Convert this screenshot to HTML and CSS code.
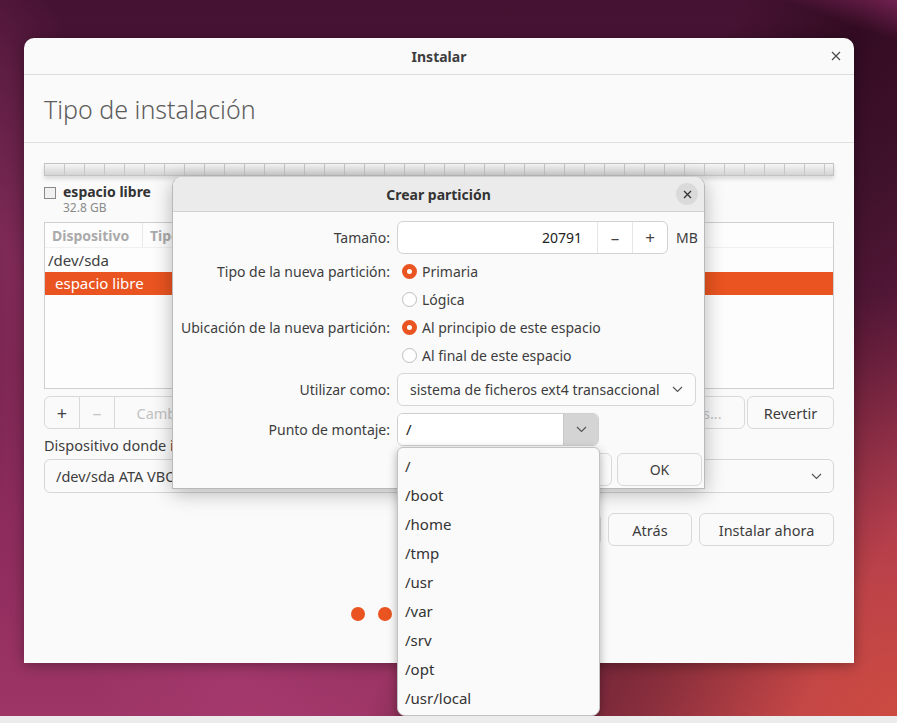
FILE: index.html
```html
<!DOCTYPE html>
<html lang="es">
<head>
<meta charset="utf-8">
<title>Instalar</title>
<link rel="stylesheet" href="styles.css">
</head>
<body>
<div class="desktop">
  <div class="window">
    <div class="headerbar">
      <span></span>
      <span class="wtitle">Instalar</span>
      <span class="wclose"><svg width="10" height="10" viewBox="0 0 10 10"><path d="M1 1L9 9M9 1L1 9" stroke="#4a4a4a" stroke-width="1.2"/></svg></span>
    </div>
    <div class="page-title">Tipo de instalación</div>
    <div class="content">
      <div class="partbar"></div>
      <div class="legend">
        <span class="swatch"></span>
        <div class="legend-text">
          <div class="lg-name">espacio libre</div>
          <div class="lg-size">32.8 GB</div>
        </div>
      </div>
      <div class="ptable">
        <div class="thead">
          <span class="th th-dev">Dispositivo</span>
          <span class="th th-type">Tipo</span>
        </div>
        <div class="tr">/dev/sda</div>
        <div class="tr sel">espacio libre</div>
      </div>
      <div class="toolbar">
        <div class="linked">
          <span class="lbtn sq">+</span>
          <span class="lbtn sq dis">–</span>
          <span class="lbtn dis wide-l">Cambiar...</span>
        </div>
        <div class="spacer"></div>
        <span class="btn dis newtable">Nueva tabla de particiones...</span>
        <span class="btn revert">Revertir</span>
      </div>
      <div class="boot-label">Dispositivo donde instalar el cargador de arranque:</div>
      <div class="combo boot-combo">
        <span>/dev/sda ATA VBOX HARDDISK (32.8 GB)</span>
        <svg class="chev" width="11" height="7" viewBox="0 0 11 7"><path d="M1 1L5.5 5.5L10 1" fill="none" stroke="#555" stroke-width="1.2"/></svg>
      </div>
      <div class="actions">
        <span class="btn quit">Salir</span>
        <span class="btn back">Atrás</span>
        <span class="btn install">Instalar ahora</span>
      </div>
      <div class="dots">
        <span class="dot on"></span><span class="dot on"></span><span class="dot on"></span><span class="dot on"></span><span class="dot on"></span><span class="dot"></span><span class="dot"></span>
      </div>
    </div>
  </div>

  <div class="dialog">
    <div class="dheader">
      <span></span>
      <span class="dtitle">Crear partición</span>
      <span class="dclose"><svg width="9" height="9" viewBox="0 0 9 9"><path d="M1 1L8 8M8 1L1 8" stroke="#333" stroke-width="1.3"/></svg></span>
    </div>
    <div class="dbody">
      <div class="row row-size">
        <span class="lbl">Tamaño:</span>
        <div class="spin">
          <span class="spin-val">20791</span>
          <span class="spin-btn">–</span>
          <span class="spin-btn">+</span>
        </div>
        <span class="unit">MB</span>
      </div>
      <div class="row row-radio first-radio">
        <span class="lbl">Tipo de la nueva partición:</span>
        <span class="radio on"></span><span class="rtext">Primaria</span>
      </div>
      <div class="row row-radio">
        <span class="lbl"></span>
        <span class="radio"></span><span class="rtext">Lógica</span>
      </div>
      <div class="row row-radio">
        <span class="lbl">Ubicación de la nueva partición:</span>
        <span class="radio on"></span><span class="rtext">Al principio de este espacio</span>
      </div>
      <div class="row row-radio">
        <span class="lbl"></span>
        <span class="radio"></span><span class="rtext">Al final de este espacio</span>
      </div>
      <div class="row row-use">
        <span class="lbl">Utilizar como:</span>
        <div class="combo use-combo">
          <span>sistema de ficheros ext4 transaccional</span>
          <svg class="chev" width="11" height="7" viewBox="0 0 11 7"><path d="M1 1L5.5 5.5L10 1" fill="none" stroke="#555" stroke-width="1.2"/></svg>
        </div>
      </div>
      <div class="row row-mount">
        <span class="lbl">Punto de montaje:</span>
        <div class="centry">
          <span class="centry-text">/</span>
          <span class="centry-btn"><svg width="11" height="7" viewBox="0 0 11 7"><path d="M1 1L5.5 5.5L10 1" fill="none" stroke="#555" stroke-width="1.2"/></svg></span>
        </div>
      </div>
      <div class="dactions">
        <span class="btn dbtn">Cancelar</span>
        <span class="btn dbtn">OK</span>
      </div>
    </div>
  </div>

  <div class="popup">
    <div class="pitem">/</div>
    <div class="pitem">/boot</div>
    <div class="pitem">/home</div>
    <div class="pitem">/tmp</div>
    <div class="pitem">/usr</div>
    <div class="pitem">/var</div>
    <div class="pitem">/srv</div>
    <div class="pitem">/opt</div>
    <div class="pitem">/usr/local</div>
  </div>

  <div class="taskstrip"></div>
</div>
</body>
</html>
```

FILE: styles.css
```css
* { box-sizing: border-box; margin: 0; padding: 0; }
html, body { width: 897px; height: 723px; overflow: hidden; }
body {
  font-family: "Noto Sans", "DejaVu Sans", sans-serif;
  font-size: 14px;
  color: #3d3d3d;
}

.desktop {
  position: relative;
  width: 897px;
  height: 723px;
  overflow: hidden;
  background:
    linear-gradient(200deg, rgba(120,35,85,0.9) 0%, rgba(120,35,85,0) 4%),
    linear-gradient(118deg, rgba(30,4,16,0) 58%, rgba(30,4,16,0.5) 68%, rgba(30,4,16,0.3) 80%, rgba(30,4,16,0) 92%),
    linear-gradient(62deg, rgba(170,60,115,0) 8%, rgba(175,62,118,0.4) 20%, rgba(170,60,115,0) 34%),
    radial-gradient(ellipse 520px 420px at 897px 716px, #cc4a40 0%, rgba(204,74,64,0.7) 35%, rgba(204,74,64,0) 100%),
    linear-gradient(180deg, #451232 0%, #541a3c 25%, #6e2049 50%, #8c2b5c 72%, #9e3666 100%);
}

.taskstrip {
  position: absolute;
  left: 0; right: 0; bottom: 0;
  height: 7px;
  background: #ececec;
}

/* main window */
.window {
  position: absolute;
  left: 24px; top: 38px;
  width: 830px; height: 625px;
  background: #fafafa;
  border-radius: 10px 10px 0 0;
  box-shadow: 0 2px 14px rgba(0,0,0,0.35);
  display: flex;
  flex-direction: column;
  white-space: nowrap;
}
.headerbar {
  height: 37px;
  border-bottom: 1px solid #dcdcdc;
  display: grid;
  grid-template-columns: 1fr auto 1fr;
  align-items: center;
}
.wtitle { font-weight: bold; font-size: 14px; color: #3d3d3d; }
.wclose { justify-self: end; margin-right: 13px; display: flex; }

.page-title {
  height: 68px;
  border-bottom: 1px solid #e0e0e0;
  padding-left: 20px;
  display: flex;
  align-items: center;
  font-size: 25px;
  font-weight: 300;
  color: #5c5c5c;
}

.content {
  padding: 20px 20px 0;
  display: flex;
  flex-direction: column;
}

.partbar {
  height: 13px;
  border: 1px solid #c3c3c3;
  background:
    repeating-linear-gradient(90deg, transparent 0 19px, #c6c6c6 19px 20px),
    linear-gradient(#f5f5f5, #d4d4d4);
  box-shadow: 0 3px 4px rgba(0,0,0,0.13);
}

.legend {
  margin-top: 8px;
  display: flex;
  gap: 7px;
}
.swatch {
  width: 12px; height: 12px;
  margin-top: 3px;
  border: 1px solid #8a8a8a;
  background: #f1f1f1;
}
.lg-name { font-weight: bold; line-height: 16px; color: #333; }
.lg-size { font-size: 12px; line-height: 15px; color: #8a8a8a; }

.ptable {
  margin-top: 7px;
  height: 167px;
  border: 1px solid #cfcfcf;
  background: #fdfdfd;
}
.thead {
  height: 25px;
  display: flex;
  align-items: stretch;
  border-bottom: 1px solid #f0f0f0;
}
.th {
  font-weight: bold;
  color: #aaaaaa;
  padding-left: 7px;
  display: flex;
  align-items: center;
}
.th-dev { width: 98px; border-right: 1px solid #e9e9e9; }
.th-type { width: 120px; }
.tr {
  height: 24px;
  line-height: 24px;
  padding-left: 3px;
  font-size: 15px;
}
.tr.sel {
  height: 23px;
  line-height: 23px;
  background: #e95420;
  color: #fff;
  padding-left: 10px;
}

.toolbar {
  margin-top: 7px;
  height: 33px;
  display: flex;
}
.linked {
  display: flex;
  border: 1px solid #d9d9d9;
  border-radius: 6px;
  overflow: hidden;
}
.lbtn {
  display: flex;
  align-items: center;
  justify-content: center;
  border-right: 1px solid #d9d9d9;
  font-size: 14.5px;
}
.lbtn.sq { width: 35px; font-size: 18px; color: #444; }
.lbtn.sq.dis { color: #c8c8c8; }
.lbtn.wide-l { width: 110px; border-right: 0; color: #c2c2c2; }
.spacer { flex: 1; }
.btn {
  display: flex;
  align-items: center;
  justify-content: center;
  height: 33px;
  border: 1px solid #d9d9d9;
  border-radius: 6px;
  background: #fafafa;
  font-size: 14.5px;
  color: #3d3d3d;
}
.btn.dis { color: #c2c2c2; }
.newtable { width: 240px; }
.revert { width: 87px; margin-left: 2px; }

.boot-label {
  margin-top: 7px;
  line-height: 18px;
  font-size: 14.5px;
}
.combo {
  display: flex;
  align-items: center;
  justify-content: space-between;
  border: 1px solid #d6d6d6;
  border-radius: 6px;
  background: #fafafa;
  font-size: 14.5px;
  white-space: nowrap;
}
.boot-combo {
  margin-top: 5px;
  height: 34px;
  padding: 0 11px 0 11px;
}

.actions {
  margin-top: 20px;
  display: flex;
  justify-content: flex-end;
  gap: 7px;
}
.quit { width: 82px; }
.back { width: 84px; }
.install { width: 135px; }

.dots {
  margin-top: 61px;
  display: flex;
  justify-content: center;
  gap: 13px;
}
.dot { width: 14px; height: 14px; border-radius: 50%; background: #d8d8d8; }
.dot.on { background: #e95420; }

/* dialog */
.dialog {
  position: absolute;
  left: 172px; top: 176px;
  width: 533px; height: 313px;
  background: #fafafa;
  border: 1px solid #b9b9b9;
  border-top-color: #d0d0d0;
  border-radius: 10px 10px 0 0;
  box-shadow: 0 4px 20px rgba(0,0,0,0.28);
  display: flex;
  flex-direction: column;
  white-space: nowrap;
}
.dheader {
  height: 35px;
  background: #ebebeb;
  border-bottom: 1px solid #d2d2d2;
  border-radius: 9px 9px 0 0;
  display: grid;
  grid-template-columns: 1fr auto 1fr;
  align-items: center;
}
.dtitle { font-weight: bold; font-size: 14px; color: #333; }
.dclose {
  justify-self: end;
  margin-right: 6px;
  width: 22px; height: 22px;
  border-radius: 50%;
  background: #dadada;
  display: flex;
  align-items: center;
  justify-content: center;
}
.dbody {
  padding: 9px 2px 0 0;
  display: flex;
  flex-direction: column;
}
.row {
  display: flex;
  align-items: center;
}
.lbl {
  width: 217px;
  flex: none;
  margin-right: 7px;
  text-align: right;
  font-size: 14px;
}
.row-size { height: 33px; }
.spin {
  width: 271px;
  height: 33px;
  display: flex;
  border: 1px solid #d2d2d2;
  border-radius: 6px;
  background: #fff;
  overflow: hidden;
}
.spin-val {
  flex: 1;
  text-align: right;
  padding-right: 15px;
  line-height: 31px;
  font-size: 14px;
  color: #222;
}
.spin-btn {
  width: 35px;
  border-left: 1px solid #e6e6e6;
  display: flex;
  align-items: center;
  justify-content: center;
  font-size: 17px;
  color: #444;
}
.unit { margin-left: 8px; font-size: 14px; }

.row-radio { height: 28px; }
.first-radio { margin-top: 3px; }
.radio {
  width: 15px; height: 15px;
  margin-left: 5px;
  border-radius: 50%;
  border: 1px solid #bdbdbd;
  background: #fff;
  flex: none;
}
.radio.on {
  border: 5px solid #e95420;
  background: #fff;
}
.rtext { margin-left: 5px; font-size: 14px; }

.row-use { margin-top: 4px; height: 33px; }
.use-combo {
  width: 299px;
  height: 33px;
  padding: 0 12px;
  background: #fcfcfc;
  font-size: 14px;
}
.row-mount { margin-top: 7px; height: 33px; }
.centry {
  width: 202px;
  height: 33px;
  display: flex;
  border: 1px solid #cfcfcf;
  border-radius: 6px;
  overflow: hidden;
}
.centry-text {
  flex: 1;
  background: #fff;
  padding-left: 8px;
  line-height: 31px;
  font-size: 15px;
  color: #222;
}
.centry-btn {
  width: 35px;
  background: #d4d4d4;
  border-left: 1px solid #c8c8c8;
  display: flex;
  align-items: center;
  justify-content: center;
}
.dactions {
  margin-top: 7px;
  display: flex;
  justify-content: flex-end;
  gap: 5px;
}
.dbtn { width: 85px; font-size: 14px; }

/* dropdown popup */
.popup {
  position: absolute;
  left: 397px; top: 447px;
  width: 203px; height: 269px;
  padding-top: 4px;
  background: #fafafa;
  border: 1px solid #c2c2c2;
  border-radius: 6px 6px 8px 8px;
  box-shadow: 0 3px 10px rgba(0,0,0,0.3);
}
.pitem {
  height: 29px;
  line-height: 29px;
  padding-left: 7px;
  font-size: 15px;
  color: #333;
}
```
